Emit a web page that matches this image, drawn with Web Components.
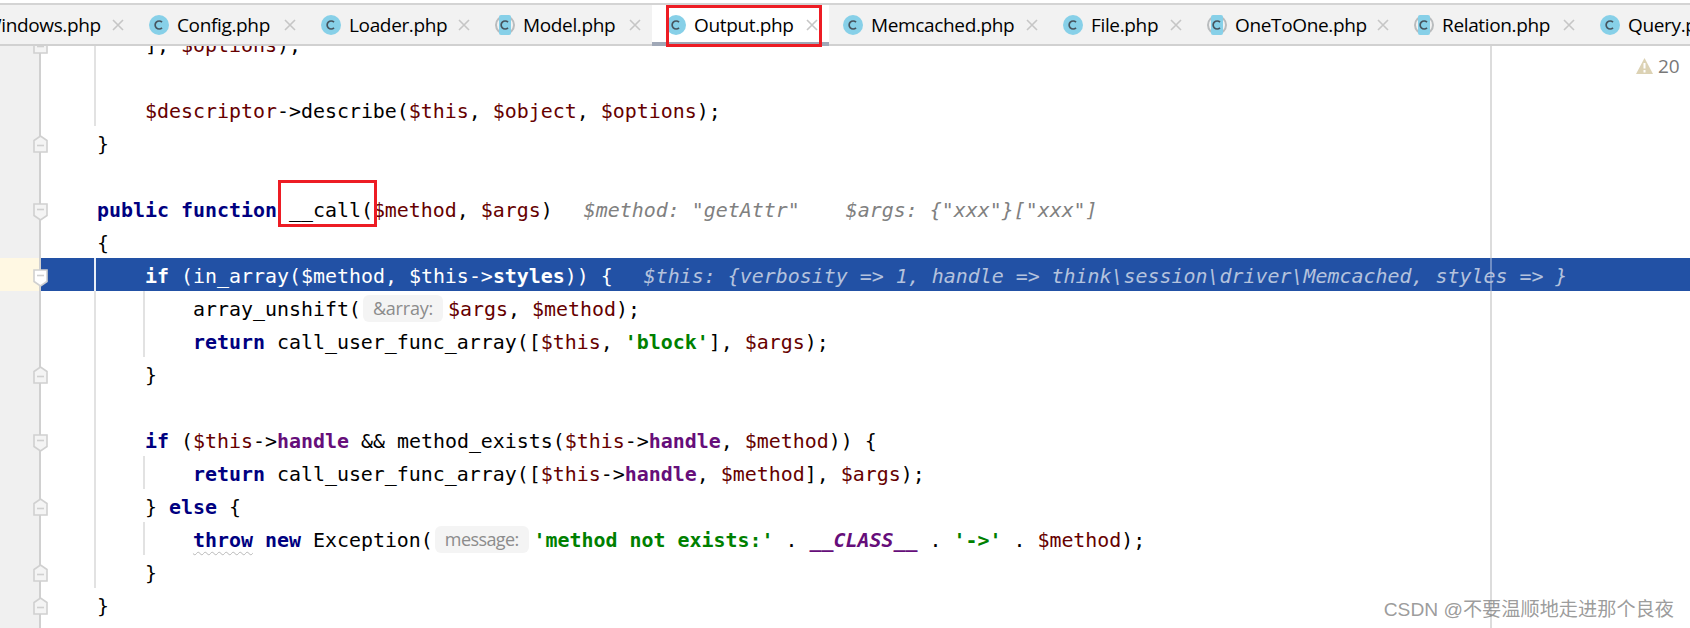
<!DOCTYPE html>
<html>
<head>
<meta charset="utf-8">
<title>Output.php</title>
<style>
  html, body { margin: 0; background: #fff; }
  /* syntax tokens live in the light DOM and are slotted into <code-row> */
  .k { color: #000080; font-weight: bold; }
  .v { color: #660000; }
  .f { color: #660e7a; font-weight: bold; }
  .s { color: #008000; font-weight: bold; }
  .c { color: #660e7a; font-weight: bold; font-style: italic; }
  .h { color: #808080; font-style: italic; }
  .w { text-decoration: underline wavy #b8b8b8 1px; text-underline-offset: 4px; }
  code-row[current] .k, code-row[current] .v, code-row[current] .f { color: #fff; }
  code-row[current] .h { color: #b4c2dd; }
</style>
</head>
<body>
<ide-window>
  <ide-tabbar>
    <ide-tab width="193" style="margin-left:-58px">Windows.php</ide-tab>
    <ide-tab width="172">Config.php</ide-tab>
    <ide-tab width="174">Loader.php</ide-tab>
    <ide-tab width="171" kind="abstract">Model.php</ide-tab>
    <ide-tab width="177" active>Output.php</ide-tab>
    <ide-tab width="220">Memcached.php</ide-tab>
    <ide-tab width="144">File.php</ide-tab>
    <ide-tab width="207" kind="abstract">OneToOne.php</ide-tab>
    <ide-tab width="186" kind="abstract">Relation.php</ide-tab>
    <ide-tab width="186">Query.php</ide-tab>
  </ide-tabbar>
  <ide-editor>
    <code-row fold="end" guides="94" style="margin-top:-19px">    ], <span class="v">$options</span>);</code-row>
    <code-row guides="94"></code-row>
    <code-row guides="94">    <span class="v">$descriptor</span>-&gt;describe(<span class="v">$this</span>, <span class="v">$object</span>, <span class="v">$options</span>);</code-row>
    <code-row fold="end">}</code-row>
    <code-row></code-row>
    <code-row fold="start"><span class="k">public function</span> __call(<span class="v">$method</span>, <span class="v">$args</span>)<span class="h" style="margin-left:31px">$method: "getAttr"</span><span class="h" style="margin-left:46px">$args: {"xxx"}["xxx"]</span></code-row>
    <code-row>{</code-row>
    <code-row fold="start" guides="94" current>    <span class="k">if</span> (in_array(<span class="v">$method</span>, <span class="v">$this</span>-&gt;<span class="f">styles</span>)) {<span class="h" style="margin-left:31px">$this: {verbosity =&gt; 1, handle =&gt; think\session\driver\Memcached, styles =&gt; }</span></code-row>
    <code-row guides="94 143">        array_unshift(<inlay-hint>&amp;array:</inlay-hint><span class="v">$args</span>, <span class="v">$method</span>);</code-row>
    <code-row guides="94 143">        <span class="k">return</span> call_user_func_array([<span class="v">$this</span>, <span class="s">'block'</span>], <span class="v">$args</span>);</code-row>
    <code-row fold="end" guides="94">    }</code-row>
    <code-row guides="94"></code-row>
    <code-row fold="start" guides="94">    <span class="k">if</span> (<span class="v">$this</span>-&gt;<span class="f">handle</span> &amp;&amp; method_exists(<span class="v">$this</span>-&gt;<span class="f">handle</span>, <span class="v">$method</span>)) {</code-row>
    <code-row guides="94 143">        <span class="k">return</span> call_user_func_array([<span class="v">$this</span>-&gt;<span class="f">handle</span>, <span class="v">$method</span>], <span class="v">$args</span>);</code-row>
    <code-row fold="end" guides="94">    } <span class="k">else</span> {</code-row>
    <code-row guides="94 143">        <span class="k w">throw</span> <span class="k">new</span> Exception(<inlay-hint style="letter-spacing:-.6px">message:</inlay-hint><span class="s">'method not exists:'</span> . <span class="c">__CLASS__</span> . <span class="s">'-&gt;'</span> . <span class="v">$method</span>);</code-row>
    <code-row fold="end" guides="94">    }</code-row>
    <code-row fold="end">}</code-row>
    <code-row></code-row>
    <warning-badge slot="overlay">20</warning-badge>
  </ide-editor>
  <mark-box style="left:666px;top:5px;width:156px;height:42px"></mark-box>
  <mark-box style="left:278px;top:180px;width:99px;height:47px"></mark-box>
  <water-mark>CSDN @不要温顺地走进那个良夜</water-mark>
</ide-window>

<script>
/** Page frame: tab strip on top, editor filling the rest. */
class IdeWindow extends HTMLElement {
  constructor() {
    super();
    this.attachShadow({ mode: 'open' });
    this.shadowRoot.innerHTML = `
      <style>
        :host {
          display: flex; flex-direction: column; position: relative;
          width: 1690px; height: 628px; overflow: hidden; background: #fff;
        }
      </style>
      <slot></slot>
    `;
  }
}

/** Row of file tabs, clipped at both window edges. */
class IdeTabbar extends HTMLElement {
  constructor() {
    super();
    this.attachShadow({ mode: 'open' });
    this.shadowRoot.innerHTML = `
      <style>
        :host { display: block; flex: none; height: 46px; padding-top: 3px; box-sizing: border-box; }
        .strip {
          display: flex; height: 41px; overflow: hidden;
          border-top: 2px solid #d4d4d4;
          background: #f2f2f2;
          box-shadow: inset 0 -2px 0 #d1d1d1;
        }
      </style>
      <div class="strip"><slot></slot></div>
    `;
  }
}

/** One file tab. @attr width - full tab width; @attr kind - "abstract" icon; @attr active */
class IdeTab extends HTMLElement {
  constructor() {
    super();
    this.attachShadow({ mode: 'open' });
    const abstract = this.getAttribute('kind') === 'abstract';
    const icon = abstract
      ? `<circle cx="10" cy="10" r="9" fill="none" stroke="#b9bcbe" stroke-width="2"/>
         <rect x="4" y="0" width="12" height="20" rx="2" fill="#87d0e8"/>`
      : `<circle cx="10" cy="10" r="10" fill="#87d0e8"/>`;
    this.shadowRoot.innerHTML = `
      <style>
        :host {
          display: flex; flex: none; align-items: center; box-sizing: border-box;
          position: relative; height: 41px; padding: 0 11px 2px 14px;
          font: 19px "Open Sans", "Noto Sans", sans-serif; color: #000;
        }
        :host([active]) { background: #fff; }
        :host([active])::after {
          content: ""; position: absolute; left: 0; right: 0; bottom: 0; height: 4.5px; background: #a0a8b7;
        }
        svg { flex: none; }
        .icon { margin-right: 8px; }
        .label { flex: 1; min-width: 0; white-space: nowrap; letter-spacing: -.35px; }
      </style>
      <svg class="icon" width="20" height="20" viewBox="0 0 20 20">${icon}
        <path d="M13 7.2a4 4 0 1 0 0 5.6" fill="none" stroke="#46545e" stroke-width="1.7"/>
      </svg>
      <span class="label"><slot></slot></span>
      <svg width="12" height="12" viewBox="0 0 12 12">
        <path d="M1 1l10 10M11 1L1 11" stroke="#c6c6c6" stroke-width="1.6"/>
      </svg>
    `;
    this.style.width = this.getAttribute('width') + 'px';
  }
}

/** Editor area: a column of rows plus the right margin line and overlays. */
class IdeEditor extends HTMLElement {
  constructor() {
    super();
    this.attachShadow({ mode: 'open' });
    this.shadowRoot.innerHTML = `
      <style>
        :host { display: block; flex: 1; position: relative; overflow: hidden; }
      </style>
      <slot></slot>
      <slot name="overlay"></slot>
    `;
  }
}

/**
 * One line of code with its gutter.
 * @attr fold - "start" or "end" folding marker; @attr guides - x positions of indent guides;
 * @attr current - the execution point line.
 */
class CodeRow extends HTMLElement {
  constructor() {
    super();
    this.attachShadow({ mode: 'open' });
    const fold = this.getAttribute('fold');
    const current = this.hasAttribute('current');
    const fill = current ? '#fff' : '#f4f4f4';
    const marker = fold === 'start'
      ? `<svg class="fold" style="top:11px" width="15" height="18" viewBox="0 0 15 18">
           <path d="M1 1H14V12.5L7.5 17L1 12.5Z" fill="${fill}" stroke="#d0d0d0" stroke-width="1.6"/>
           <path d="M4 6.5H11" stroke="#d0d0d0" stroke-width="1.6"/></svg>`
      : fold === 'end'
      ? `<svg class="fold" style="top:9px" width="15" height="18" viewBox="0 0 15 18">
           <path d="M1 17H14V5.5L7.5 1L1 5.5Z" fill="${fill}" stroke="#d0d0d0" stroke-width="1.6"/>
           <path d="M4 10.5H11" stroke="#d0d0d0" stroke-width="1.6"/></svg>`
      : '';
    const guideColor = current ? '#e8eef8' : '#e2e2e2';
    const lines = (this.getAttribute('guides') || '').split(' ').filter(Boolean)
      .map((x) => `linear-gradient(${guideColor}, ${guideColor}) ${x - 41}px 0 / 2px 100% no-repeat`);
    lines.push(`linear-gradient(${current ? '#6f8dc4' : '#dcdcdc'}, ${current ? '#6f8dc4' : '#dcdcdc'}) ${1490 - 41}px 0 / 2px 100% no-repeat`);
    this.shadowRoot.innerHTML = `
      <style>
        :host {
          display: flex; height: 33px; position: relative;
          font: 19.93px/33px "DejaVu Sans Mono", "Liberation Mono", monospace;
          color: ${current ? '#fff' : '#000'};
        }
        .gutter {
          flex: none; width: 39px; position: relative;
          background: ${current ? '#fff8e3' : '#f0f0f0'};
          border-right: 2px solid #d0d0d0;
        }
        .fold { position: absolute; left: 33px; z-index: 1; }
        .code {
          flex: 1; min-width: 0; padding: 2px 0 0 56px; white-space: pre;
          background: ${lines.join(', ')}${current ? ', #2251a5' : ''};
        }
      </style>
      <div class="gutter">${marker}</div>
      <div class="code"><slot></slot></div>
    `;
  }
}

/** Grey parameter-name hint drawn inline in the code. */
class InlayHint extends HTMLElement {
  constructor() {
    super();
    this.attachShadow({ mode: 'open' });
    this.shadowRoot.innerHTML = `
      <style>
        :host {
          display: inline-block; height: 27px; margin: 0 5px 0 2px; padding: 0 10px;
          border-radius: 6px; background: #f4f4f4; vertical-align: 1px; white-space: nowrap;
          font: 18px/27px "Open Sans", "Noto Sans", sans-serif; letter-spacing: -.2px; color: #8c8c8c;
        }
      </style>
      <slot></slot>
    `;
  }
}

/** Inspection counter in the top right corner of the editor. */
class WarningBadge extends HTMLElement {
  constructor() {
    super();
    this.attachShadow({ mode: 'open' });
    this.shadowRoot.innerHTML = `
      <style>
        :host {
          position: absolute; left: 1636px; top: 8px; display: flex; align-items: center; gap: 5px;
          font: 19px/24px "Open Sans", "Noto Sans", sans-serif; color: #787878;
        }
      </style>
      <svg width="17" height="16" viewBox="0 0 17 16">
        <path d="M8.5 0L17 16H0Z" fill="#dcd2b4"/>
        <path d="M8.5 5V10.5M8.5 12V14.5" stroke="#fff" stroke-width="2"/>
      </svg>
      <slot></slot>
    `;
  }
}

/** Red annotation rectangle drawn over the screenshot. */
class MarkBox extends HTMLElement {
  constructor() {
    super();
    this.attachShadow({ mode: 'open' });
    this.shadowRoot.innerHTML = `
      <style>
        :host { position: absolute; display: block; box-sizing: border-box; border: 3px solid #ed1c24; }
      </style>
    `;
  }
}

/** Publisher's watermark in the bottom right corner. */
class WaterMark extends HTMLElement {
  constructor() {
    super();
    this.attachShadow({ mode: 'open' });
    this.shadowRoot.innerHTML = `
      <style>
        :host {
          position: absolute; right: 16px; bottom: 6px; white-space: nowrap;
          font: 19.2px/24px "Liberation Sans", "Noto Sans CJK SC", sans-serif; color: rgba(130, 130, 130, .8);
        }
      </style>
      <slot></slot>
    `;
  }
}

customElements.define('ide-window', IdeWindow);
customElements.define('ide-tabbar', IdeTabbar);
customElements.define('ide-tab', IdeTab);
customElements.define('ide-editor', IdeEditor);
customElements.define('code-row', CodeRow);
customElements.define('inlay-hint', InlayHint);
customElements.define('warning-badge', WarningBadge);
customElements.define('mark-box', MarkBox);
customElements.define('water-mark', WaterMark);
</script>
</body>
</html>
